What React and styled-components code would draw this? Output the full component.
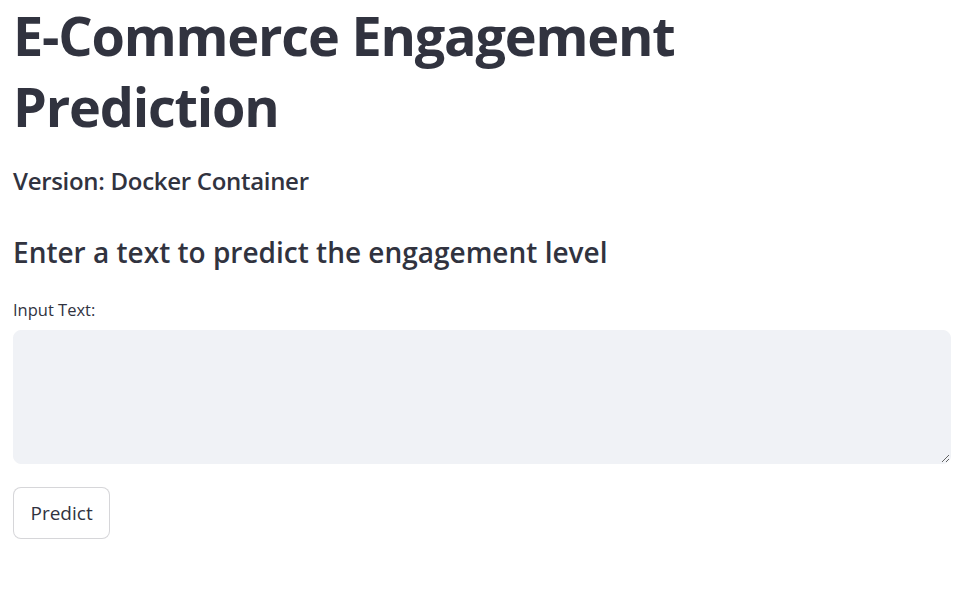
import React from 'react';
import styled, { createGlobalStyle } from 'styled-components';

const GlobalStyle = createGlobalStyle`
  body {
    margin: 0;
    background: #ffffff;
    font-family: 'Open Sans', 'Noto Sans', sans-serif;
    color: #31333f;
  }
`;

const Main = styled.main`
  padding: 0 16px 0 13px;
  display: flex;
  flex-direction: column;
`;

const Title = styled.h1`
  margin: 0;
  font-size: 54px;
  font-weight: 700;
  line-height: 71px;
  letter-spacing: -1.2px;
  color: #31333f;
  max-width: 720px;
`;

const Version = styled.h3`
  margin: 24px 0 0 0;
  font-size: 24px;
  font-weight: 600;
  line-height: 30px;
  letter-spacing: -0.3px;
`;

const SubHeading = styled.h2`
  margin: 38px 0 0 0;
  font-size: 28px;
  font-weight: 600;
  line-height: 36px;
  letter-spacing: 0;
`;

const Field = styled.div`
  display: flex;
  flex-direction: column;
  margin-top: 29px;
`;

const Label = styled.label`
  font-size: 16.5px;
  line-height: 22px;
  margin-bottom: 9px;
`;

const TextArea = styled.textarea`
  box-sizing: border-box;
  width: 100%;
  height: 134px;
  background: #f0f2f6;
  border: 1px solid #f0f2f6;
  border-radius: 8px;
  outline: none;
  padding: 12px 16px;
  font-family: inherit;
  font-size: 16px;
  color: #31333f;
  resize: vertical;
`;

const Button = styled.button`
  align-self: flex-start;
  margin-top: 23px;
  height: 52px;
  padding: 0 16.5px;
  background: #ffffff;
  border: 1px solid rgba(49, 51, 63, 0.2);
  border-radius: 8px;
  font-family: inherit;
  font-size: 19px;
  color: #31333f;
  cursor: pointer;
`;

const App = () => {
  return (
    <>
      <GlobalStyle />
      <Main>
        <Title>E-Commerce Engagement Prediction</Title>
        <Version>Version: Docker Container</Version>
        <SubHeading>Enter a text to predict the engagement level</SubHeading>
        <Field>
          <Label>Input Text:</Label>
          <TextArea />
        </Field>
        <Button>Predict</Button>
      </Main>
    </>
  );
};

export default App;
